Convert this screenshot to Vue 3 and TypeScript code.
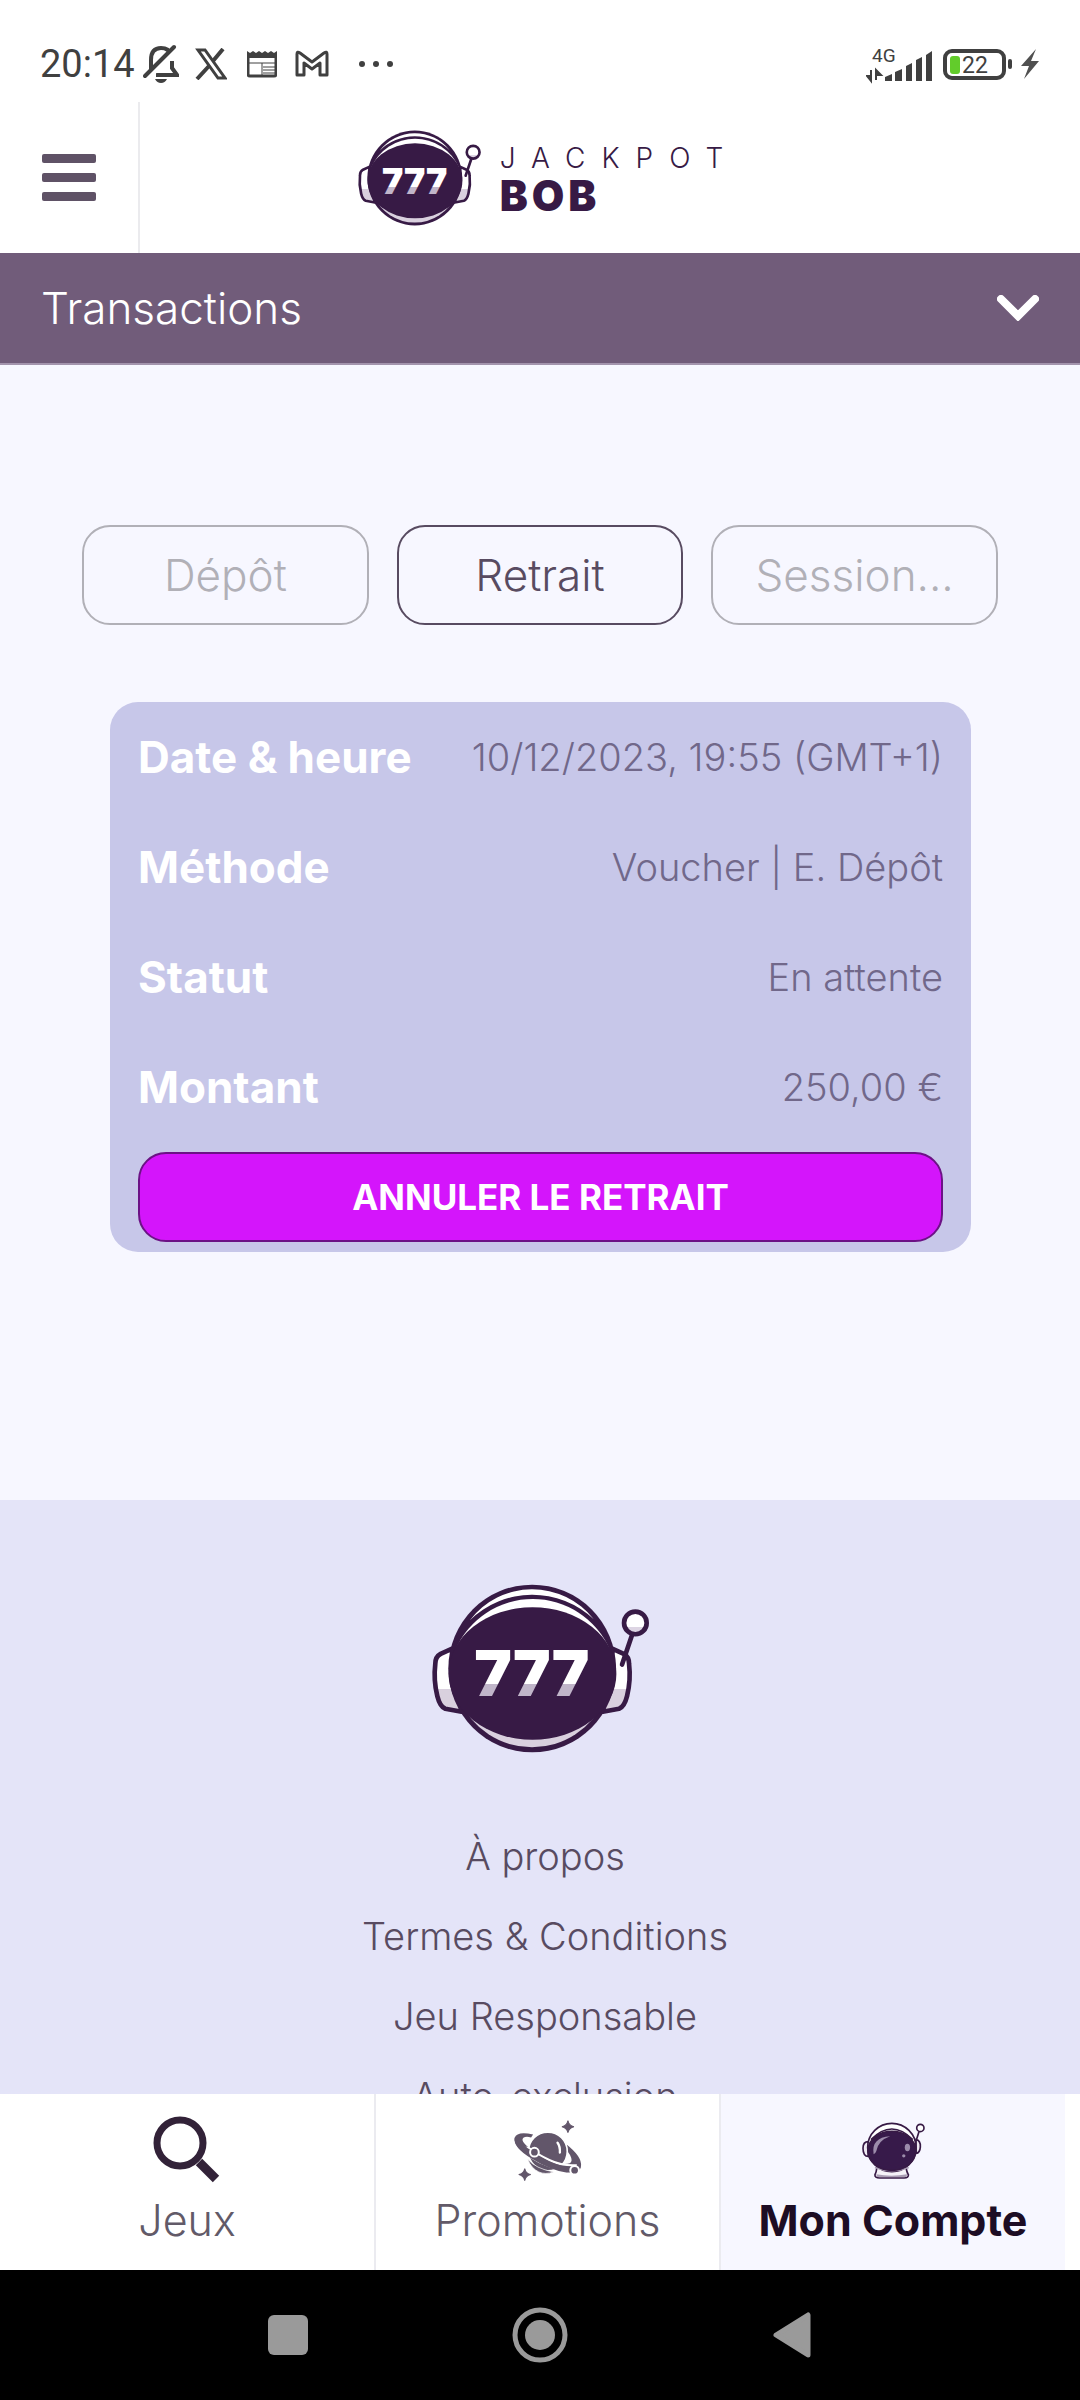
<script setup lang="ts">
import { ref } from 'vue'

interface Detail {
  label: string
  value: string
}

const tabs: string[] = ['Dépôt', 'Retrait', 'Session...']
const activeTab = ref<string>('Retrait')

const details: Detail[] = [
  { label: 'Date & heure', value: '10/12/2023, 19:55 (GMT+1)' },
  { label: 'Méthode', value: 'Voucher | E. Dépôt' },
  { label: 'Statut', value: 'En attente' },
  { label: 'Montant', value: '250,00 €' },
]

const links: string[] = ['À propos', 'Termes & Conditions', 'Jeu Responsable', 'Auto-exclusion']
</script>

<template>
  <div class="screen">
    <svg class="sprite" width="0" height="0" aria-hidden="true">
      <defs>
        <linearGradient id="digits" gradientUnits="userSpaceOnUse" x1="0" y1="270" x2="0" y2="410">
          <stop offset="0.73" stop-color="#ffffff" />
          <stop offset="0.73" stop-color="#c0b5c9" />
        </linearGradient>
        <linearGradient id="ear" gradientUnits="userSpaceOnUse" x1="0" y1="260" x2="0" y2="460">
          <stop offset="0.63" stop-color="#ffffff" />
          <stop offset="0.63" stop-color="#d9d0de" />
        </linearGradient>
        <linearGradient id="knob" x1="0" y1="0" x2="0" y2="1">
          <stop offset="0.7" stop-color="#ffffff" />
          <stop offset="0.7" stop-color="#ddd5e3" />
        </linearGradient>
        <g id="helmet">
          <g fill="url(#ear)" stroke="#371a45" stroke-width="14" stroke-linejoin="round">
            <path d="M125 266 92 281Q76 290 76 310Q70 360 82 408Q90 440 106 446L155 455Z" />
            <path d="M609 266 642 281Q658 290 658 310Q664 360 652 408Q644 440 628 446L579 455Z" />
          </g>
          <circle cx="367" cy="325" r="252" fill="#371a45" />
          <path d="M180 180A235 235 0 0 1 552 177A268 268 0 0 0 180 180Z" fill="#fff" />
          <path d="M137 267A253 253 0 0 1 600 267Z" fill="#fff" />
          <path d="M148 418A238 238 0 0 0 585 418Z" fill="#d9d0de" />
          <ellipse cx="368" cy="340" rx="252" ry="199" fill="#371a45" />
          <path d="M667 224 637 313" stroke="#371a45" stroke-width="14" stroke-linecap="round" />
          <circle cx="677" cy="188" r="34" fill="url(#knob)" stroke="#371a45" stroke-width="14" />
        </g>
      </defs>
    </svg>

    <div class="status">
      <div class="status-left">
        <span class="clock">20:14</span>
        <svg class="bell" width="36" height="40" viewBox="0 0 36 40">
          <path d="M8 28V16Q8 4 18 4Q26 4 28 11M29 17V24L34 31H13" fill="none" stroke="#404040" stroke-width="4" />
          <path d="M12 35H24Q22 39 18 39Q14 39 12 35Z" fill="#404040" />
          <path d="M4 35 34 5" stroke="#fff" stroke-width="5" />
          <path d="M2 32 31 3" stroke="#404040" stroke-width="4" stroke-linecap="round" />
        </svg>
        <svg class="x-app" width="32" height="32" viewBox="0 0 32 32" fill="none" stroke="#404040">
          <path d="M3 2H10L30 30H23Z" stroke-width="3" />
          <path d="M28 1 18 13M14 18 2 31" stroke-width="4" />
        </svg>
        <svg class="news" width="30" height="28" viewBox="0 0 30 28">
          <path d="M0 1 3 3 6 1 9 3 12 1 15 3 18 1 21 3 24 1 27 3 30 1V8H0Z" fill="#404040" />
          <path d="M1 7V24Q1 26 3 26H27Q29 26 29 24V7" fill="none" stroke="#404040" stroke-width="3" />
          <path d="M2 13H28M15 13V26M16 17H28M16 20H28M16 23H28" stroke="#404040" stroke-width="1" />
        </svg>
        <svg class="mail" width="34" height="28" viewBox="0 0 34 28">
          <path d="M2 25V4Q2 1 5 3L17 12 29 3Q32 1 32 4V25H25V13L17 19 9 13V25Z" fill="none" stroke="#404040" stroke-width="3" stroke-linejoin="round" />
        </svg>
        <svg class="more" width="34" height="6" viewBox="0 0 34 6" fill="#404040">
          <circle cx="3" cy="3" r="3" /><circle cx="17" cy="3" r="3" /><circle cx="31" cy="3" r="3" />
        </svg>
      </div>
      <div class="status-right">
        <svg width="68" height="48" viewBox="0 -6 68 48" fill="#404040">
          <text class="network" x="6" y="16">4G</text>
          <path d="M5 24V32M5 35 1 30H5ZM10 34V24L15 29H10Z" stroke="#404040" stroke-width="2" />
          <path d="M19 35V31L26 28V35ZM29 35V26L36 23V35ZM40 35V20L46 17V35ZM50 35V14L56 11V35ZM60 35V9L66 5V35Z" />
        </svg>
        <svg width="70" height="32" viewBox="0 0 70 32">
          <rect x="3" y="3" width="59" height="27" rx="7" fill="none" stroke="#404040" stroke-width="4" />
          <rect x="66" y="11" width="4" height="10" rx="2" fill="#404040" />
          <rect x="8" y="8" width="10" height="18" rx="3" fill="#62cc2b" />
          <text class="charge" x="20" y="25" fill="#404040">22</text>
        </svg>
        <svg width="20" height="32" viewBox="0 0 20 32" fill="#505050">
          <path d="M16 1 1 18H9L4 31 19 13H11Z" />
        </svg>
      </div>
    </div>

    <header class="header">
      <button class="menu" type="button" aria-label="Menu">
        <svg width="54" height="48" viewBox="0 0 54 48" fill="#5f5266">
          <rect width="54" height="9" rx="2" /><rect y="19" width="54" height="9" rx="2" /><rect y="38" width="54" height="9" rx="2" />
        </svg>
      </button>
      <a class="brand" href="#">
        <svg width="125" height="98" viewBox="60 66 664 518">
          <use href="#helmet" />
          <text class="sevens" x="366" y="408" text-anchor="middle" fill="url(#digits)">777</text>
        </svg>
        <span class="brand-name">
          <span class="brand-top">JACKPOT</span>
          <span class="brand-bottom">BOB</span>
        </span>
      </a>
    </header>

    <button class="section" type="button">
      <span>Transactions</span>
      <svg width="42" height="26" viewBox="0 0 42 26">
        <path d="M4 4 21 21 38 4" fill="none" stroke="#fff" stroke-width="8" stroke-linecap="round" />
      </svg>
    </button>

    <div class="content">
      <main class="main">
        <div class="tabs">
          <button
            v-for="tab in tabs"
            :key="tab"
            class="tab"
            :class="{ active: tab === activeTab }"
            type="button"
            @click="activeTab = tab"
          >{{ tab }}</button>
        </div>
        <section class="card">
          <dl class="details">
            <div v-for="d in details" :key="d.label" class="row">
              <dt>{{ d.label }}</dt>
              <dd>{{ d.value }}</dd>
            </div>
          </dl>
          <button class="cancel" type="button">ANNULER LE RETRAIT</button>
        </section>
      </main>
      <footer class="footer">
        <svg width="221" height="173" viewBox="60 66 664 518">
          <use href="#helmet" />
          <text class="sevens" x="366" y="408" text-anchor="middle" fill="url(#digits)">777</text>
        </svg>
        <nav class="links">
          <a v-for="link in links" :key="link" href="#">{{ link }}</a>
        </nav>
      </footer>
    </div>

    <nav class="bottom">
      <a class="item" href="#">
        <svg width="68" height="68" viewBox="0 0 68 68" fill="none" stroke="#322238">
          <circle cx="27" cy="27" r="23" stroke-width="7" />
          <path d="M46 46 63 63" stroke-width="9" />
        </svg>
        <span>Jeux</span>
      </a>
      <a class="item" href="#">
        <svg width="71" height="63" viewBox="20 20 212 188" fill="#62566a">
          <path d="M83 66Q35 55 28 76Q24 102 71 131L77 110Q43 86 54 76Q62 70 77 75ZM183 96Q229 132 226 160Q220 185 180 178L168 154Q197 157 198 143Q197 127 180 110Z" />
          <circle cx="127" cy="117" r="58" stroke="#fff" stroke-width="5" />
          <path d="M67 140Q90 168 144 178Q120 187 100 178Q77 167 67 140Z" stroke="#fff" stroke-width="2" />
          <path d="M45 105Q75 140 128 160T205 180L210 158Q170 160 133 143T70 106Z" stroke="#fff" stroke-width="6" />
          <path d="M28 76Q22 104 78 138Q135 173 182 180Q228 181 226 157Q222 173 185 164Q138 154 98 130Q45 96 50 78Z" />
          <path d="M156 91Q164 102 163 120" fill="none" stroke="#fff" stroke-width="7" stroke-linecap="round" />
          <circle cx="87" cy="119" r="13" stroke="#fff" stroke-width="6" />
          <circle cx="207" cy="173" r="13" stroke="#fff" stroke-width="6" />
          <path d="M187 25Q190 40 205 43Q190 46 187 61Q184 46 169 43Q184 40 187 25ZM58 168Q61 183 76 186Q61 189 58 204Q55 189 40 186Q55 183 58 168Z" stroke="#62566a" stroke-width="3" />
        </svg>
        <span>Promotions</span>
      </a>
      <a class="item current" href="#" aria-current="page">
        <svg width="65" height="59" viewBox="1064 26 196 178" stroke="#371a45" stroke-width="5">
          <path d="M1112 166Q1110 182 1106 188Q1105 198 1120 198H1194Q1208 198 1207 188Q1202 182 1200 166Z" fill="#f5f2f8" />
          <path d="M1110 187Q1156 195 1203 187L1201 195H1112Z" fill="#a99db3" stroke="none" />
          <path d="M1086 88Q1070 88 1070 108Q1070 132 1086 133ZM1230 82Q1244 84 1243 104Q1242 122 1230 124Z" fill="#eee9f2" />
          <circle cx="1157" cy="106" r="73" fill="#fff" />
          <path d="M1094 82Q1157 18 1220 82" fill="none" />
          <path d="M1106 166Q1157 186 1208 166" fill="none" stroke="#a99db3" />
          <ellipse cx="1157" cy="116" rx="72" ry="59" fill="#371a4a" />
          <path d="M1102 126Q1094 76 1152 72Q1116 84 1110 117Q1107 125 1102 126Z" fill="#9c8cab" stroke="none" />
          <ellipse cx="1204" cy="106" rx="8" ry="11" fill="#9c8cab" stroke="none" />
          <circle cx="1193" cy="131" r="5" fill="#9c8cab" stroke="none" />
          <path d="M1239 58 1230 86" />
          <circle cx="1243" cy="47" r="11" fill="#fff" />
        </svg>
        <span>Mon Compte</span>
      </a>
    </nav>

    <div class="system">
      <button type="button" aria-label="Applications récentes">
        <svg width="40" height="40" viewBox="0 0 40 40"><rect width="40" height="40" rx="6" fill="#9a9a9a" /></svg>
      </button>
      <button type="button" aria-label="Accueil">
        <svg width="56" height="56" viewBox="0 0 56 56">
          <circle cx="28" cy="28" r="25" fill="none" stroke="#9a9a9a" stroke-width="5" /><circle cx="28" cy="28" r="15" fill="#9a9a9a" />
        </svg>
      </button>
      <button type="button" aria-label="Retour">
        <svg width="38" height="46" viewBox="0 0 38 46">
          <path d="M3 23 35 3V43Z" fill="#9a9a9a" stroke="#9a9a9a" stroke-width="5" stroke-linejoin="round" />
        </svg>
      </button>
    </div>
  </div>
</template>

<style>
body {
  margin: 0;
}
</style>

<style scoped>
.screen {
  display: flex;
  flex-direction: column;
  height: 100vh;
  background: #fff;
  font-family: Inter, 'Liberation Sans', sans-serif;
  font-weight: 300;
}
.screen * {
  box-sizing: border-box;
}
button {
  border: 0;
  margin: 0;
  padding: 0;
  background: none;
  font: inherit;
  color: inherit;
}
a {
  color: inherit;
  text-decoration: none;
}
svg {
  display: block;
  flex: none;
}
.sprite {
  position: absolute;
}
.sevens {
  font: 900 190px Inter, sans-serif;
}
.status {
  display: flex;
  justify-content: space-between;
  flex: none;
  height: 102px;
  padding: 28px 40px 0;
}
.status-left,
.status-right {
  display: flex;
  align-items: center;
  height: 72px;
}
.clock {
  font: 400 38px/72px Roboto, sans-serif;
  color: #404040;
}
.bell {
  margin-left: 8px;
}
.x-app {
  margin-left: 16px;
}
.news {
  margin-left: 20px;
}
.mail {
  margin-left: 18px;
}
.more {
  margin-left: 30px;
}
.status-right {
  gap: 8px;
}
.network {
  font: 400 19px Roboto, sans-serif;
}
.charge {
  font: 400 23px Roboto, sans-serif;
}
.header {
  display: grid;
  grid-template-columns: 140px 1fr 140px;
  flex: none;
  height: 151px;
}
.menu {
  display: flex;
  align-items: center;
  padding-left: 42px;
  border-right: 2px solid #ebebee;
}
.brand {
  display: flex;
  align-items: center;
  justify-content: center;
  gap: 18px;
  color: #371a45;
}
.brand-name {
  display: flex;
  flex-direction: column;
}
.brand-top {
  margin-right: -16px;
  font-size: 28px;
  line-height: 36px;
  letter-spacing: 16px;
}
.brand-bottom {
  font-size: 42px;
  font-weight: 900;
  line-height: 40px;
  letter-spacing: 4px;
}
.section {
  display: flex;
  align-items: center;
  justify-content: space-between;
  flex: none;
  height: 112px;
  padding: 0 41px;
  border-bottom: 2px solid #a394ad;
  background: #715c7a;
  color: #fff;
  font-size: 44px;
}
.content {
  flex: 1;
  min-height: 0;
  overflow: hidden;
  background: #e4e4f8;
}
.main {
  padding: 160px 0 248px;
  background: #f7f7ff;
}
.tabs {
  display: flex;
  gap: 28px;
  padding: 0 82px;
}
.tab {
  flex: 1;
  height: 100px;
  border: 2px solid #b1b0b7;
  border-radius: 28px;
  color: #b1b0b7;
  font-size: 44px;
}
.tab.active {
  border-color: #584b61;
  color: #584b61;
}
.card {
  margin: 77px 109px 0 110px;
  padding: 0 28px 10px;
  border-radius: 28px;
  background: #c7c7e9;
}
.details {
  margin: 0;
  padding-bottom: 10px;
}
.row {
  display: flex;
  align-items: center;
  justify-content: space-between;
  height: 110px;
}
dt {
  color: #fff;
  font-size: 44px;
  font-weight: 700;
}
dd {
  margin: 0;
  color: #71688a;
  font-size: 38px;
}
.cancel {
  width: 100%;
  height: 90px;
  border: 2px solid #6c1286;
  border-radius: 28px;
  background: #d415fb;
  color: #fff;
  font-size: 35px;
  font-weight: 700;
}
.footer {
  display: flex;
  flex-direction: column;
  align-items: center;
  gap: 61px;
  padding-top: 82px;
}
.links {
  display: flex;
  flex-direction: column;
  align-items: center;
  padding-left: 10px;
  color: #584b61;
  font-size: 38px;
  line-height: 80px;
}
.bottom {
  display: grid;
  grid-template-columns: 376fr 345fr 344fr 15fr;
  flex: none;
  height: 176px;
  background: #fff;
}
.item {
  display: grid;
  grid-template-rows: 76px 64px;
  align-content: center;
  place-items: center;
  border-right: 2px solid #ebebf0;
  color: #625a68;
  font-size: 43px;
}
.item.current {
  border: 0;
  background: #f7f7ff;
  color: #1d0d24;
  font-weight: 700;
}
.system {
  display: flex;
  align-items: center;
  justify-content: center;
  gap: 172px;
  flex: none;
  height: 130px;
  background: #000;
}
.system button {
  display: flex;
  align-items: center;
  justify-content: center;
  width: 80px;
  height: 80px;
}
</style>
